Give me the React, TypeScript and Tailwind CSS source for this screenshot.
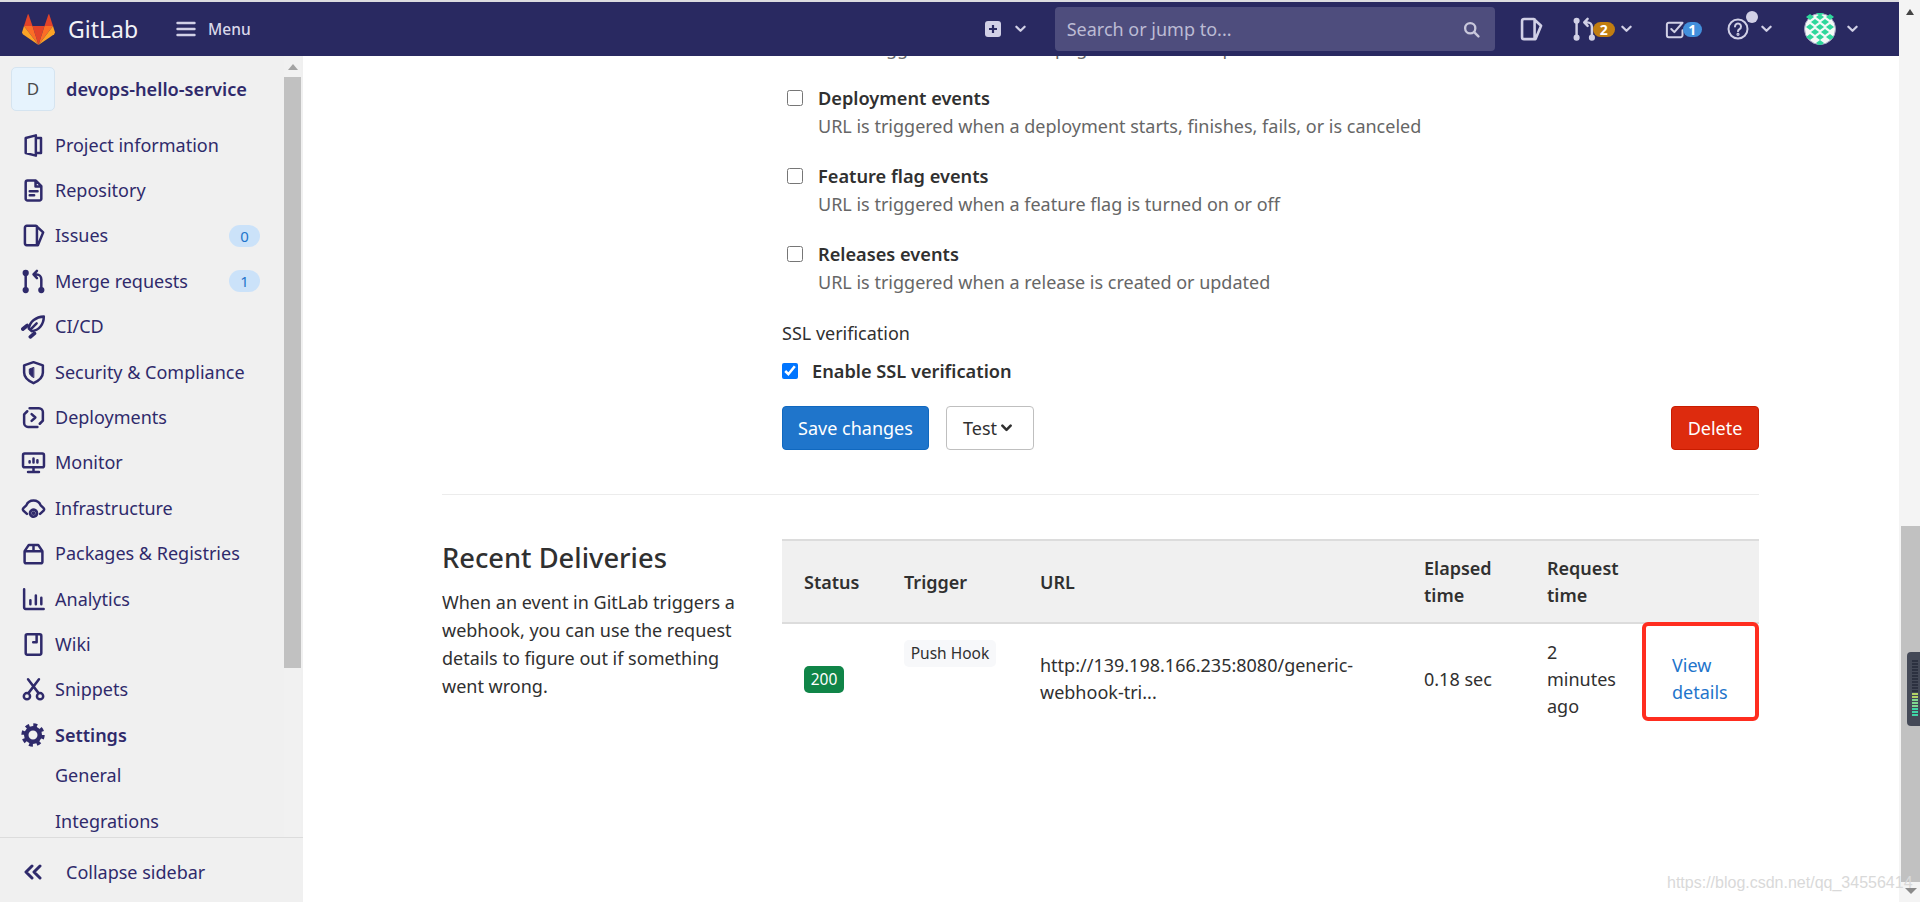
import React from "react";

type P = { children: React.ReactNode; className?: string; w?: number };
function Ic({ children, className = "w-[25px] h-[25px] shrink-0", w = 1.6 }: P) {
  return (
    <svg viewBox="0 0 16 16" fill="none" stroke="currentColor" strokeWidth={w} strokeLinecap="round" strokeLinejoin="round" className={className}>
      {children}
    </svg>
  );
}

const IssueShape = <path d="M2.5 3a1.2 1.2 0 0 1 1.2-1.2h6L14.2 6l-3.4 8.2H3.7a1.2 1.2 0 0 1-1.2-1.2zM10.2 2v12" />;
const MrShape = (
  <>
    <path d="M3 2.5v11M13 13V6.5a3 3 0 0 0-3-3H8.5M10.2 1.2 8 3.5l2.2 2.3" />
    <circle cx="3" cy="2.5" r="1.2" fill="currentColor" />
    <circle cx="3" cy="13.5" r="1.2" fill="currentColor" />
    <circle cx="13" cy="13.5" r="1.2" fill="currentColor" />
  </>
);

const navIcons: Record<string, React.ReactNode> = {
  project: <Ic><path d="M9.5 1.5 3 3.2v9.6l6.5 1.7zM9.5 3.2h3.3v9.6H9.5" /></Ic>,
  repo: <Ic><path d="M3 2.8a1.2 1.2 0 0 1 1.2-1.2h5.3L13 5.2v8a1.2 1.2 0 0 1-1.2 1.2H4.2A1.2 1.2 0 0 1 3 13.2zM9.3 1.8v3.6H13M5.6 8.4h5M5.6 11h2.8" /></Ic>,
  issues: <Ic>{IssueShape}</Ic>,
  merge: <Ic>{MrShape}</Ic>,
  cicd: (
    <Ic>
      <path d="M14.6 1.6C9.6 1.8 5.6 4.6 5 9.4l1.8 1.6c4.8-.6 7.8-4.4 7.8-9.4zM6 10l4-4" />
      <path d="M1.2 9.6 4 7.4M6 14.6l2.6-2.2" strokeWidth={2.4} />
    </Ic>
  ),
  shield: (
    <Ic>
      <path d="M8 1.4 14 3.4V8c0 3.4-2.8 5.4-6 6.8C4.800 13.400 2 11.400 2 8V3.400z" />
      <path d="M8 4.800 5.300 5.800V8c0 1.300 1.200 2.400 2.700 3.200z" fill="currentColor" strokeWidth={0.6} />
    </Ic>
  ),
  deploy: <Ic><path d="M5.500 2H11.500a2.500 2.500 0 0 1 2.500 2.500V10M10.500 14H4.500A2.500 2.500 0 0 1 2 11.500V6M6.800 5.800 9.200 8l-2.400 2.200M2 6l2-2M14 10l-2 2" /></Ic>,
  monitor: (
    <Ic>
      <rect x="1.300" y="2.300" width="13.400" height="8.700" rx="1" />
      <path d="M4.500 14h7M8 11v3M5.500 8V7.200M8 8V5.500M10.500 8V6.500" />
    </Ic>
  ),
  infra: (
    <Ic>
      <path d="M3.800 11.500 1.500 9.300a1.200 1.200 0 0 1 0-1.500L3.400 6a5 5 0 0 1 9.200 0l1.900 1.800a1.200 1.200 0 0 1 0 1.500l-2.300 2.200" />
      <circle cx="8" cy="11" r="2.200" strokeWidth={1.800} strokeDasharray="1.700 .5" />
      <circle cx="8" cy="11" r="1.200" fill="currentColor" stroke="none" />
    </Ic>
  ),
  pkg: <Ic><path d="M2.300 6.500h11.400v6.800a1 1 0 0 1-1 1H3.300a1 1 0 0 1-1-1zM2.300 6.500 5 2.500h6l2.700 4M8 2.500v4" /></Ic>,
  chart: <Ic><path d="M2 1.500V13a1 1 0 0 0 1 1h11.500M6 8.500V11M9.500 5.500V11M13 6.800V11" /></Ic>,
  wiki: <Ic><path d="M3 2.500a1 1 0 0 1 1-1h8a1 1 0 0 1 1 1v11a1 1 0 0 1-1 1H4a1 1 0 0 1-1-1zM10 1.800v4.700H7.800" /></Ic>,
  snip: (
    <Ic>
      <path d="M4.500 1.500 11 10M11.500 1.500 5 10" />
      <circle cx="3.800" cy="12.300" r="2" />
      <circle cx="12.200" cy="12.300" r="2" />
    </Ic>
  ),
};

const nav: [string, string, string?][] = [
  ["project", "Project information"],
  ["repo", "Repository"],
  ["issues", "Issues", "0"],
  ["merge", "Merge requests", "1"],
  ["cicd", "CI/CD"],
  ["shield", "Security & Compliance"],
  ["deploy", "Deployments"],
  ["monitor", "Monitor"],
  ["infra", "Infrastructure"],
  ["pkg", "Packages & Registries"],
  ["chart", "Analytics"],
  ["wiki", "Wiki"],
  ["snip", "Snippets"],
];

function Chevron({ className = "", sw = 2 }: { className?: string; sw?: number }) {
  return (
    <svg viewBox="0 0 12 8" fill="none" stroke="currentColor" strokeWidth={sw} strokeLinecap="round" strokeLinejoin="round" className={`w-[11px] h-[8px] shrink-0 ${className}`}>
      <path d="M1.500 1.500 6 6l4.500-4.500" />
    </svg>
  );
}

function Logo() {
  return (
    <svg viewBox="0 0 33 31" className="w-[33px] h-[31px] ml-[22px] shrink-0">
      <polygon points="16.500,31 10.500,12 22.500,12" fill="#e24329" />
      <polygon points="16.500,31 10.500,12 2,12" fill="#fc6d26" />
      <polygon points="16.500,31 22.500,12 31,12" fill="#fc6d26" />
      <polygon points="2,12 0,18.500 .8,20.300 16.500,31" fill="#fca326" />
      <polygon points="31,12 33,18.500 32.200,20.300 16.500,31" fill="#fca326" />
      <polygon points="2,12 5.800,.3 6.500,.3 10.500,12" fill="#e24329" />
      <polygon points="31,12 27.200,.3 26.500,.3 22.500,12" fill="#e24329" />
    </svg>
  );
}

function Avatar() {
  const cells = [
    [6, 4], [16, 4], [26, 4], [11, 9], [21, 9], [6, 14], [16, 14], [26, 14], [11, 19], [21, 19], [6, 24], [16, 24], [26, 24], [16, 30], [16, 0],
  ];
  return (
    <svg viewBox="0 0 32 32" className="w-[32px] h-[32px] shrink-0 block">
      <circle cx="16" cy="16" r="15.500" fill="#f4faf7" stroke="#a3a3c2" strokeWidth="1" />
      <g fill="#2fd79c">
        {cells.map(([x, y]) => (
          <polygon key={`${x}-${y}`} points={`${x},${y - 3} ${x + 4},${y} ${x},${y + 3} ${x - 4},${y}`} />
        ))}
      </g>
    </svg>
  );
}

function Header() {
  return (
    <header className="h-[54px] shrink-0 bg-[#292961] flex items-center text-[#d1d0e6]">
      <Logo />
      <span className="ml-[13px] text-[23px] text-[#f2f2f7] leading-none">GitLab</span>
      <svg viewBox="0 0 20 16" className="w-[20px] h-[16px] ml-[38px] shrink-0" stroke="currentColor" strokeWidth="2.400" strokeLinecap="round">
        <path d="M1.500 2h17M1.500 8h17M1.500 14h17" />
      </svg>
      <span className="ml-[12px] pt-[2px] text-[15.500px] font-medium text-[#d9d8ea]">Menu</span>

      <svg viewBox="0 0 16 16" className="w-[16px] h-[16px] ml-[734px] shrink-0">
        <rect width="16" height="16" rx="3" fill="#d1d0e6" />
        <path d="M8 4v8M4 8h8" stroke="#292961" strokeWidth="2.200" />
      </svg>
      <Chevron className="ml-[14px]" sw={2.4} />
      <div className="ml-[29px] w-[440px] h-[44px] rounded-[4px] bg-[#4e4d7d] flex items-center pl-[12px] pr-[15px] shrink-0">
        <span className="text-[18px] text-[#bcbbd4] flex-1">Search or jump to...</span>
        <svg viewBox="0 0 16 16" fill="none" stroke="#c9c8dc" strokeWidth="2.200" strokeLinecap="round" className="w-[17px] h-[17px]">
          <circle cx="6.800" cy="6.800" r="4.800" />
          <path d="m10.500 10.500 4 4" />
        </svg>
      </div>
      <span className="ml-[23px]"><Ic className="w-[26px] h-[26px] block">{IssueShape}</Ic></span>
      <span className="ml-[28px]"><Ic className="w-[24.500px] h-[24.500px] block">{MrShape}</Ic></span>
      <span className="-ml-[3.500px] relative w-[22px] h-[15px] shrink-0 rounded-full bg-[#c17d10] text-white text-[14px] font-bold flex items-center justify-center">2</span>
      <Chevron className="ml-[6px]" sw={2.4} />
      <svg viewBox="0 0 16 16" fill="none" stroke="currentColor" strokeWidth="1.600" strokeLinecap="round" strokeLinejoin="round" className="w-[20px] h-[20px] ml-[33px] shrink-0">
        <path d="M14 3H3a1.500 1.500 0 0 0-1.500 1.500V13A1.500 1.500 0 0 0 3 14.500h9.500A1.500 1.500 0 0 0 14 13V9M5 8l2.500 2.500L14 3" />
      </svg>
      <span className="-ml-[2px] relative w-[19px] h-[15px] shrink-0 rounded-full bg-[#428fdc] text-white text-[14px] font-bold flex items-center justify-center">1</span>
      <span className="relative ml-[25px] w-[22px] h-[22px] shrink-0">
        <svg viewBox="0 0 22 22" fill="none" stroke="currentColor" strokeWidth="2" strokeLinecap="round" className="w-[22px] h-[22px]">
          <circle cx="11" cy="11" r="9.500" />
          <path d="M8 8.500a3 3 0 1 1 4.500 2.600c-1 .6-1.500 1-1.500 2.200" />
          <circle cx="11" cy="16.300" r=".6" />
        </svg>
        <span className="absolute -top-[7px] -right-[9px] w-[12px] h-[12px] rounded-full bg-[#d1d0e6]" />
      </span>
      <Chevron className="ml-[12px]" sw={2.4} />
      <span className="ml-[32px]"><Avatar /></span>
      <Chevron className="ml-[11px]" sw={2.4} />
    </header>
  );
}

function Sidebar() {
  return (
    <aside className="w-[303px] shrink-0 bg-[#f0f0f0] flex flex-col text-[#2f2a6b] text-[18px]">
      <div className="flex-1 min-h-0 flex overflow-hidden">
        <div className="flex-1 min-w-0">
          <div className="h-[66.500px] pt-[11px] pl-[11px] flex items-start">
            <span className="w-[44px] h-[44px] rounded-[5px] bg-[#e6f3fd] border border-[#d5e4f0] flex items-center justify-center text-[#4b4b4b] text-[17px]">D</span>
            <span className="ml-[11px] h-[44px] pt-[1px] flex items-center font-semibold text-[18.200px]">devops-hello-service</span>
          </div>
          {nav.map(([icon, label, badge]) => (
            <div key={label} className="h-[45.400px] flex items-center">
              <span className="w-[25px] ml-[20.500px] flex justify-center">{navIcons[icon]}</span>
              <span className="ml-[9.500px] flex-1">{label}</span>
              {badge && (
                <span className="mr-[24px] w-[31px] h-[22px] rounded-full bg-[#cbe2f9] text-[#1f75cb] text-[15px] flex items-center justify-center">{badge}</span>
              )}
            </div>
          ))}
          <div className="h-[45.400px] flex items-center font-semibold">
            <svg viewBox="0 0 16 16" fill="none" stroke="currentColor" className="ml-[21px] w-[24px] h-[24px] shrink-0">
              <circle cx="8" cy="8" r="4.500" strokeWidth="3" />
              <circle cx="8" cy="8" r="6.500" strokeWidth="2.600" strokeDasharray="2.550 2.555" />
            </svg>
            <span className="ml-[10px]">Settings</span>
          </div>
          <div className="-mt-[5px] h-[45.500px] pl-[55px] flex items-center">General</div>
          <div className="h-[45.500px] pl-[55px] flex items-center">Integrations</div>
        </div>
        <div className="w-[17px] mr-[2px] bg-[#f1f1f1] flex flex-col items-center">
          <span className="mt-[8px] w-0 h-0 border-x-[5px] border-x-transparent border-b-[6px] border-b-[#a3a3a3]" />
          <span className="mt-[7px] w-full h-[591px] bg-[#c1c1c1]" />
        </div>
      </div>
      <div className="h-[65px] pt-[4px] shrink-0 border-t border-[#dcdcdc] flex items-center">
        <svg viewBox="0 0 18 16" fill="none" stroke="currentColor" strokeWidth="3" strokeLinecap="round" strokeLinejoin="round" className="ml-[24px] w-[18px] h-[16px]">
          <path d="M8 2 2 8l6 6M16 2l-6 6 6 6" />
        </svg>
        <span className="ml-[24px]">Collapse sidebar</span>
      </div>
    </aside>
  );
}

function Check({ title, desc }: { title: string; desc: string }) {
  return (
    <div className="flex pl-[5px] mt-[22px]">
      <input type="checkbox" className="w-[16px] h-[16px] mt-[6px] shrink-0" />
      <div className="ml-[15px]">
        <div className="font-semibold text-[18.200px] text-[#303030]">{title}</div>
        <div className="text-[#666666]">{desc}</div>
      </div>
    </div>
  );
}

function Main() {
  return (
    <main className="flex-1 min-w-0 overflow-hidden bg-white text-[18px] leading-[28px] text-[#303030] pl-[139px] pr-[140px]">
      <div className="pl-[340px] -mt-[22px]">
        <div className="pl-[29px] text-[#666666]">URL is triggered when a wiki page is created or updated</div>
        <Check title="Deployment events" desc="URL is triggered when a deployment starts, finishes, fails, or is canceled" />
        <Check title="Feature flag events" desc="URL is triggered when a feature flag is turned on or off" />
        <Check title="Releases events" desc="URL is triggered when a release is created or updated" />
        <div className="mt-[23px]">SSL verification</div>
        <div className="mt-[10px] flex items-center">
          <input type="checkbox" defaultChecked className="w-[16px] h-[16px] shrink-0" />
          <span className="ml-[14px] font-semibold text-[18.200px]">Enable SSL verification</span>
        </div>
        <div className="mt-[21px] flex">
          <button className="w-[147px] h-[44px] rounded-[4px] bg-[#1f75cb] border border-[#1068bf] text-white">Save changes</button>
          <button className="ml-[17px] pl-[16px] w-[88px] h-[44px] rounded-[4px] bg-white border border-[#bfbfbf] text-[#303030] flex items-center gap-[4px]">
            Test
            <Chevron className="text-[#303030]" sw={2.8} />
          </button>
          <button className="ml-auto w-[88px] h-[44px] rounded-[4px] bg-[#dd2b0e] border border-[#c91c00] text-white">Delete</button>
        </div>
      </div>
      <div className="mt-[44px] border-t border-[#ececec]" />
      <section className="mt-[44px] flex">
        <div className="w-[340px] shrink-0 pr-[36px] pt-[1px]">
          <h3 className="text-[27.300px] leading-[36px] font-medium text-[#303030]">Recent Deliveries</h3>
          <p className="mt-[12px]">When an event in GitLab triggers a webhook, you can use the request details to figure out if something went wrong.</p>
        </div>
        <table className="flex-1 table-fixed border-separate border-spacing-0 leading-[27px]">
          <colgroup>
            <col className="w-[100px]" />
            <col className="w-[136px]" />
            <col className="w-[384px]" />
            <col className="w-[123px]" />
            <col className="w-[125px]" />
            <col className="w-[109px]" />
          </colgroup>
          <thead>
            <tr>
              {["Status", "Trigger", "URL", "Elapsed time", "Request time", ""].map((h, i) => (
                <th key={i} className="h-[85px] pt-[1px] bg-[#f0f0f0] border-y-[2.500px] border-[#dcdcdc] text-left font-semibold pl-[22px] pr-[10px]">{h}</th>
              ))}
            </tr>
          </thead>
          <tbody>
            <tr>
              <td className="pl-[22px] py-[14.500px] align-middle">
                <span className="inline-flex w-[40px] h-[27px] rounded-[5px] bg-[#108548] text-white text-[15.500px] items-center justify-center">200</span>
              </td>
              <td className="pl-[22px] py-[14.500px] align-top">
                <span className="inline-flex w-[92px] h-[27px] rounded-[5px] bg-[#f7f8fa] text-[15.500px] items-center justify-center">Push Hook</span>
              </td>
              <td className="pl-[22px] pr-[10px] py-[14.500px] align-middle">http://139.198.166.235:8080/generic-webhook-tri...</td>
              <td className="pl-[22px] py-[14.500px] align-middle">0.18 sec</td>
              <td className="pl-[22px] pr-[30px] py-[14.500px] align-middle">2 minutes ago</td>
              <td className="relative pl-[22px] pr-[20px] py-[14.500px] align-middle text-[#1f75cb]">
                View details
                <span className="absolute -left-[8px] right-0 -top-[2.500px] h-[99px] border-[4px] border-[#ff2d1f] rounded-[6px]" />
              </td>
            </tr>
          </tbody>
        </table>
      </section>
    </main>
  );
}

const ticks = Array.from({ length: 19 }, (_, i) => i);
function tickClass(i: number) {
  if (i < 11) return "bg-[#2c3140]";
  if (i < 13) return "bg-[#b3d266]";
  if (i < 16) return "bg-[#7fd68f]";
  return "bg-[#3fd6a6]";
}

function PageScrollbar() {
  return (
    <div className="w-[21px] shrink-0 bg-[#f4f4f4] flex flex-col items-end">
      <span className="mt-[9px] mr-[6px] w-0 h-0 border-x-[4.500px] border-x-transparent border-b-[6px] border-b-[#444444]" />
      <div className="relative mt-[511px] w-[19px] h-[356px] bg-[#c1c1c1]">
        <div className="absolute right-0 top-[126px] w-[13px] h-[74px] rounded-l-[4px] bg-[#444957] pl-[5px] pt-[8px] flex flex-col gap-[1.500px]">
          {ticks.map((i) => (
            <span key={i} className={`block w-[6px] h-[1.500px] ${tickClass(i)}`} />
          ))}
        </div>
      </div>
      <span className="mt-[6px] mr-[3px] w-0 h-0 border-x-[6px] border-x-transparent border-t-[6px] border-t-[#8a8a8a]" />
    </div>
  );
}

export default function App() {
  return (
    <div className="relative h-screen w-full flex overflow-hidden font-['Noto_Sans',sans-serif]">
      <div className="flex-1 min-w-0 flex flex-col">
        <div className="h-[2px] shrink-0 bg-[#dcdce0]" />
        <Header />
        <div className="flex-1 min-h-0 flex">
          <Sidebar />
          <Main />
        </div>
      </div>
      <PageScrollbar />
      <span className="absolute left-[1667px] top-[872px] text-[16px] leading-[22px] font-['Liberation_Sans',sans-serif] text-[#d9d9d9] whitespace-nowrap">https://blog.csdn.net/qq_34556414</span>
    </div>
  );
}
